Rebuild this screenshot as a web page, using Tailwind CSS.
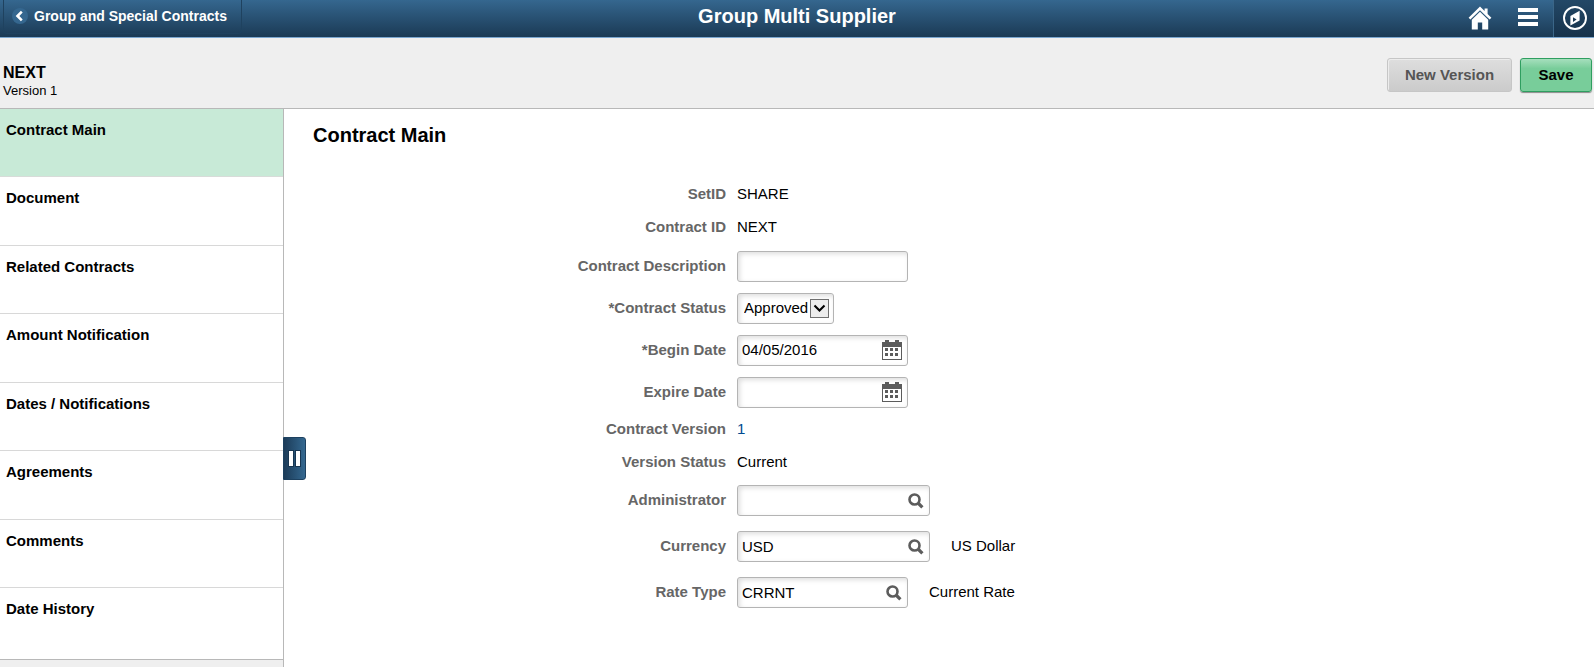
<!DOCTYPE html>
<html lang="en">
<head>
    <meta charset="UTF-8">
    <meta name="viewport" content="width=device-width, initial-scale=1.0">
    <script src="https://cdn.jsdelivr.net/npm/@tailwindcss/browser@4"></script>
    <title>Group Multi Supplier</title>
</head>
<body class="min-h-screen flex flex-col bg-white text-black text-[15px] leading-5 font-['Liberation_Sans',Arial,sans-serif]">
    <!-- Banner -->
    <header class="grid grid-cols-[1fr_auto_1fr] h-[38px] border-b border-[#7ba7d0] bg-linear-to-b from-[#35678f] to-[#1b3a55] text-white">
        <div class="pl-[3px]">
            <button type="button" class="flex items-center gap-1.5 h-[34px] pb-px pl-2 pr-[14px] rounded-b border border-t-0 border-[#1f425f] text-sm font-bold">
                <svg class="w-4 h-4" viewBox="0 0 16 16" fill="none">
                    <circle cx="8" cy="8" r="8" fill="#35678f"/>
                    <path d="M9.8 3.7L5.5 8L9.8 12.3" stroke="#fff" stroke-width="2.6"/>
                </svg>
                Group and Special Contracts
            </button>
        </div>
        <h1 class="text-xl leading-8 font-bold">Group Multi Supplier</h1>
        <div class="flex justify-end">
            <button type="button" aria-label="Home" class="w-12 pr-0.5 pb-0.5 flex items-center justify-center">
                <svg class="w-6 h-6" viewBox="0 0 24 24" fill="#fff">
                    <path d="M12 0.5L0.6 11.8L2.4 13.6L12 4.2L21.6 13.6L23.4 11.8L19.6 8V2.6H16.6V5Z"/>
                    <path d="M12 5.8L3.8 13.8V23.5H9.8V16.5H14.2V23.5H20.2V13.8Z"/>
                </svg>
            </button>
            <button type="button" aria-label="Actions" class="w-12 pr-0.5 pb-1 flex items-center justify-center">
                <svg class="w-5 h-[18px]" viewBox="0 0 20 18" fill="#fff">
                    <path d="M0 0H20V4H0ZM0 7H20V11H0ZM0 14H20V18H0Z"/>
                </svg>
            </button>
            <button type="button" aria-label="NavBar" class="w-[41px] pl-0.5 pb-px flex items-center justify-center border-l border-[#3b6688] bg-linear-to-b from-[#234867] to-[#16324b]">
                <svg class="w-6 h-6" viewBox="0 0 24 24" fill="none">
                    <circle cx="12" cy="12" r="11" stroke="#fff" stroke-width="1.9"/>
                    <path d="M16.6 4.8V14.4L7.4 19.4V10Z" fill="#fff"/>
                    <path d="M10 11.2L13.6 13.4L10 16Z" fill="#1b3a55"/>
                </svg>
            </button>
        </div>
    </header>

    <!-- Contract summary and page actions -->
    <section class="flex justify-between items-start h-[71px] pt-5 pl-[3px] pr-0.5 bg-[#efefef] border-b border-[#b8b8b8]">
        <div class="pt-[5px]">
            <h2 class="text-base leading-5 font-bold">NEXT</h2>
            <p class="text-[13px] leading-4">Version 1</p>
        </div>
        <div class="flex gap-2">
            <button type="button" class="w-[125px] h-[34px] rounded-[3px] border border-[#c6c6c6] bg-linear-to-b from-[#dedede] to-[#cbcbcb] shadow-[inset_1px_1px_0_#ececec] font-bold text-[#555]">New Version</button>
            <button type="button" class="w-[72px] h-[34px] rounded-[3px] border border-[#2f9e60] bg-linear-to-b from-[#a5dfbd] from-0% via-[#78cd9a] via-30% to-[#78cd9a] shadow-[0_1px_1px_#8a8a8a] font-bold">Save</button>
        </div>
    </section>

    <div class="flex flex-1">
        <!-- Side menu -->
        <aside class="relative w-[284px] shrink-0 bg-[#efefef] border-r border-[#b8b8b8]">
            <nav>
                <ul class="font-bold">
                    <li class="h-[68px] border-b border-[#d8dcd9] bg-[#c8ead7]"><a href="#" class="block h-full pt-[11px] px-1.5">Contract Main</a></li>
                    <li class="h-[69px] border-b border-[#d8d8d8] bg-white"><a href="#" class="block h-full pt-[11px] px-1.5">Document</a></li>
                    <li class="h-[68px] border-b border-[#d8d8d8] bg-white"><a href="#" class="block h-full pt-[11px] px-1.5">Related Contracts</a></li>
                    <li class="h-[69px] border-b border-[#d8d8d8] bg-white"><a href="#" class="block h-full pt-[11px] px-1.5">Amount Notification</a></li>
                    <li class="h-[68px] border-b border-[#d8d8d8] bg-white"><a href="#" class="block h-full pt-[11px] px-1.5">Dates / Notifications</a></li>
                    <li class="h-[69px] border-b border-[#d8d8d8] bg-white"><a href="#" class="block h-full pt-[11px] px-1.5">Agreements</a></li>
                    <li class="h-[68px] border-b border-[#d8d8d8] bg-white"><a href="#" class="block h-full pt-[11px] px-1.5">Comments</a></li>
                    <li class="h-[72px] border-b border-[#b8b8b8] bg-white"><a href="#" class="block h-full pt-[11px] px-1.5">Date History</a></li>
                </ul>
            </nav>
            <button type="button" aria-label="Collapse menu" class="absolute left-full top-[328px] w-[23px] h-[43px] flex items-center justify-center rounded-r-[3px] border border-[#1d4160] bg-linear-to-r from-[#1c3c59] to-[#346890]">
                <svg class="w-[13px] h-[17px]" viewBox="0 0 13 17">
                    <path d="M0 0H6V17H0ZM7 0H13V17H7Z" fill="#183651"/>
                    <path d="M1 1H5V16H1ZM8 1H12V16H8Z" fill="#fff"/>
                </svg>
            </button>
        </aside>

        <!-- Contract form -->
        <main class="flex-1">
            <h2 class="pt-3 pl-[29px] text-xl leading-7 font-bold">Contract Main</h2>
            <form class="pt-7">
                <div class="flex gap-[11px] h-[33px] items-center">
                    <span class="w-[442px] text-right font-bold text-[#666]">SetID</span>
                    <span>SHARE</span>
                </div>
                <div class="flex gap-[11px] h-[33px] items-center">
                    <span class="w-[442px] text-right font-bold text-[#666]">Contract ID</span>
                    <span>NEXT</span>
                </div>

                <div class="flex gap-[11px] h-[42px] mt-0.5 pt-1.5 items-start">
                    <label for="description" class="w-[442px] pt-[5px] text-right font-bold text-[#666]">Contract Description</label>
                    <input type="text" id="description" class="w-[171px] h-[31px] px-1 rounded-[3px] border border-[#b4b4b4] shadow-[inset_2px_2px_5px_#dedede]">
                </div>
                <div class="flex gap-[11px] h-[42px] pt-1.5 items-start">
                    <label for="status" class="w-[442px] pt-[5px] text-right font-bold text-[#666]">*Contract Status</label>
                    <div class="relative">
                        <select id="status" class="appearance-none w-[97px] h-[31px] pl-1.5 pb-px rounded-[3px] border border-[#b4b4b4] shadow-[inset_2px_2px_5px_#dedede]">
                            <option>Approved</option>
                        </select>
                        <svg class="absolute right-[5px] top-1.5 w-[19px] h-[19px] pointer-events-none" viewBox="0 0 19 19">
                            <rect x="0.5" y="0.5" width="18" height="18" fill="#ededed" stroke="#707070"/>
                            <path d="M4.5 6.5L9.5 11.5L14.5 6.5" fill="none" stroke="#000" stroke-width="2.1"/>
                        </svg>
                    </div>
                </div>
                <div class="flex gap-[11px] h-[42px] pt-1.5 items-start">
                    <label for="begin" class="w-[442px] pt-[5px] text-right font-bold text-[#666]">*Begin Date</label>
                    <div class="flex items-center w-[171px] h-[31px] pl-1 pr-[5px] pb-px rounded-[3px] border border-[#b4b4b4] shadow-[inset_2px_2px_5px_#dedede]">
                        <input type="text" id="begin" value="04/05/2016" class="flex-1 min-w-0 bg-transparent outline-none">
                        <button type="button" aria-label="Choose begin date">
                            <svg class="w-5 h-5" viewBox="0 0 20 20" fill="#5c5c5c">
                                <path d="M0 2H3V0H7V2H13V0H17V2H20V20H0ZM1 7V19H19V7Z" fill-rule="evenodd"/>
                                <path d="M3 8H6V11H3ZM8 8H11V11H8ZM13 8H16V11H13ZM3 13H6V16H3ZM8 13H11V16H8ZM13 13H16V16H13Z"/>
                            </svg>
                        </button>
                    </div>
                </div>
                <div class="flex gap-[11px] h-[42px] pt-1.5 items-start">
                    <label for="expire" class="w-[442px] pt-[5px] text-right font-bold text-[#666]">Expire Date</label>
                    <div class="flex items-center w-[171px] h-[31px] pl-1 pr-[5px] pb-px rounded-[3px] border border-[#b4b4b4] shadow-[inset_2px_2px_5px_#dedede]">
                        <input type="text" id="expire" class="flex-1 min-w-0 bg-transparent outline-none">
                        <button type="button" aria-label="Choose expire date">
                            <svg class="w-5 h-5" viewBox="0 0 20 20" fill="#5c5c5c">
                                <path d="M0 2H3V0H7V2H13V0H17V2H20V20H0ZM1 7V19H19V7Z" fill-rule="evenodd"/>
                                <path d="M3 8H6V11H3ZM8 8H11V11H8ZM13 8H16V11H13ZM3 13H6V16H3ZM8 13H11V16H8ZM13 13H16V16H13Z"/>
                            </svg>
                        </button>
                    </div>
                </div>

                <div class="flex gap-[11px] h-[33px] pb-0.5 items-center">
                    <span class="w-[442px] text-right font-bold text-[#666]">Contract Version</span>
                    <a href="#" class="text-[#004b91]">1</a>
                </div>
                <div class="flex gap-[11px] h-[33px] pb-0.5 items-center">
                    <span class="w-[442px] text-right font-bold text-[#666]">Version Status</span>
                    <span>Current</span>
                </div>

                <div class="flex gap-[11px] h-[46px] pt-1.5 items-start">
                    <label for="administrator" class="w-[442px] pt-[5px] text-right font-bold text-[#666]">Administrator</label>
                    <div class="flex items-center w-[193px] h-[31px] pl-1 pr-[5px] rounded-[3px] border border-[#b4b4b4] shadow-[inset_2px_2px_5px_#dedede]">
                        <input type="text" id="administrator" class="flex-1 min-w-0 bg-transparent outline-none">
                        <button type="button" aria-label="Look up administrator">
                            <svg class="w-4 h-4" viewBox="0 0 16 16" fill="none" stroke="#5c5c5c">
                                <circle cx="6.5" cy="6.5" r="5" stroke-width="2.6"/>
                                <path d="M10 10L14.4 14.4" stroke-width="3.2"/>
                            </svg>
                        </button>
                    </div>
                </div>
                <div class="flex gap-[11px] h-[46px] pt-1.5 items-start">
                    <label for="currency" class="w-[442px] pt-[5px] text-right font-bold text-[#666]">Currency</label>
                    <div class="flex items-center w-[193px] h-[31px] pl-1 pr-[5px] rounded-[3px] border border-[#b4b4b4] shadow-[inset_2px_2px_5px_#dedede]">
                        <input type="text" id="currency" value="USD" class="flex-1 min-w-0 bg-transparent outline-none">
                        <button type="button" aria-label="Look up currency">
                            <svg class="w-4 h-4" viewBox="0 0 16 16" fill="none" stroke="#5c5c5c">
                                <circle cx="6.5" cy="6.5" r="5" stroke-width="2.6"/>
                                <path d="M10 10L14.4 14.4" stroke-width="3.2"/>
                            </svg>
                        </button>
                    </div>
                    <span class="pl-2.5 pt-[5px]">US Dollar</span>
                </div>
                <div class="flex gap-[11px] h-[46px] pt-1.5 items-start">
                    <label for="rate" class="w-[442px] pt-[5px] text-right font-bold text-[#666]">Rate Type</label>
                    <div class="flex items-center w-[171px] h-[31px] pl-1 pr-[5px] rounded-[3px] border border-[#b4b4b4] shadow-[inset_2px_2px_5px_#dedede]">
                        <input type="text" id="rate" value="CRRNT" class="flex-1 min-w-0 bg-transparent outline-none">
                        <button type="button" aria-label="Look up rate type">
                            <svg class="w-4 h-4" viewBox="0 0 16 16" fill="none" stroke="#5c5c5c">
                                <circle cx="6.5" cy="6.5" r="5" stroke-width="2.6"/>
                                <path d="M10 10L14.4 14.4" stroke-width="3.2"/>
                            </svg>
                        </button>
                    </div>
                    <span class="pl-2.5 pt-[5px]">Current Rate</span>
                </div>
            </form>
        </main>
    </div>
</body>
</html>
